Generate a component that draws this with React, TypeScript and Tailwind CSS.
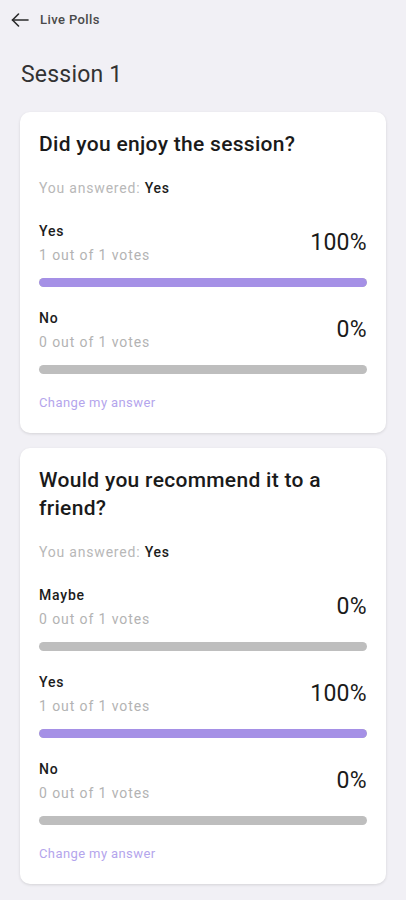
import React from 'react';

type Option = { label: string; votes: number; total: number };
type Poll = { question: string; answer: string; options: Option[] };

const polls: Poll[] = [
  {
    question: 'Did you enjoy the session?',
    answer: 'Yes',
    options: [
      { label: 'Yes', votes: 1, total: 1 },
      { label: 'No', votes: 0, total: 1 },
    ],
  },
  {
    question: 'Would you recommend it to a friend?',
    answer: 'Yes',
    options: [
      { label: 'Maybe', votes: 0, total: 1 },
      { label: 'Yes', votes: 1, total: 1 },
      { label: 'No', votes: 0, total: 1 },
    ],
  },
];

const BackArrow = () => (
  <svg width="18" height="14" viewBox="0 0 18 14" fill="none" stroke="#2b2b2b" strokeWidth="1.6" strokeLinecap="round" strokeLinejoin="round">
    <path d="M17 7H1.5" />
    <path d="M7.5 1L1.5 7l6 6" />
  </svg>
);

const OptionRow: React.FC<{ option: Option }> = ({ option }) => {
  const pct = Math.round((option.votes / option.total) * 100);
  return (
    <div className="mt-[19px]">
      <div className="flex items-center justify-between">
        <div className="flex flex-col">
          <span className="text-[14px] leading-6 tracking-[0.8px] font-medium text-[#1c1c1c]">{option.label}</span>
          <span className="text-[14px] leading-6 tracking-[0.9px] text-[#b3b3b3]">
            {option.votes} out of {option.total} votes
          </span>
        </div>
        <span className="text-[23px] leading-7 tracking-[0.3px] text-[#1a1a1a]">{pct}%</span>
      </div>
      <div className="mt-[11px] h-[9px] rounded-full bg-[#bebebe] overflow-hidden">
        {pct > 0 && <div className="h-full rounded-full bg-[#a590e6]" style={{ width: `${pct}%` }} />}
      </div>
    </div>
  );
};

const PollCard: React.FC<{ poll: Poll }> = ({ poll }) => (
  <div className="bg-white rounded-[10px] shadow-[0_1px_3px_rgba(0,0,0,0.12)] px-[19px] pt-[18px] pb-[20px]">
    <h2 className="text-[21px] leading-[28px] tracking-[0.3px] font-medium text-[#1a1a1a]">{poll.question}</h2>
    <p className="mt-[18px] text-[14px] leading-6 tracking-[0.8px] text-[#b8b8b8]">
      You answered: <span className="font-medium text-[#1c1c1c]">{poll.answer}</span>
    </p>
    {poll.options.map((o, i) => (
      <OptionRow key={i} option={o} />
    ))}
    <p className="mt-[19px] text-[13px] leading-5 tracking-[0.4px] text-[#b4a5ec]">Change my answer</p>
  </div>
);

export default function App() {
  return (
    <div className="min-h-[900px] bg-[#f1f0f5] font-['Roboto',sans-serif]">
      <div className="h-10 flex items-center pl-[11px]">
        <BackArrow />
        <span className="ml-[11px] text-[13px] tracking-[0.4px] font-medium text-[#4a4a4a]">Live Polls</span>
      </div>
      <h1 className="mt-[21px] px-[21px] text-[23px] leading-7 tracking-[0.2px] text-[#333333]">Session 1</h1>
      <div className="mt-[23px] px-[20px] flex flex-col gap-[15px] pb-4">
        {polls.map((p, i) => (
          <PollCard key={i} poll={p} />
        ))}
      </div>
    </div>
  );
}
